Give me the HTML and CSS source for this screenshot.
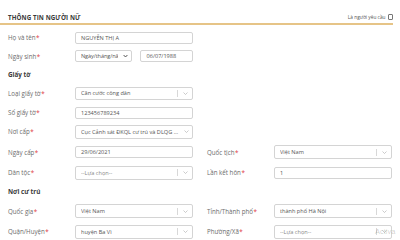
FILE: index.html
```html
<!DOCTYPE html>
<html lang="vi">
<head>
    <meta charset="UTF-8">
    <title>Thông tin người nữ</title>
    <link rel="stylesheet" href="styles.css">
</head>
<body>
    <div class="panel">
        <div class="panel-head">
            <h2 class="panel-title">THÔNG TIN NGƯỜI NỮ</h2>
            <label class="requester">Là người yêu cầu <span class="check"></span></label>
        </div>

        <div class="form-body">
            <div class="form-row">
                <div class="field">
                    <span class="lbl">Họ và tên<i>*</i></span>
                    <div class="input">NGUYỄN THỊ A</div>
                </div>
            </div>
            <div class="form-row">
                <div class="field">
                    <span class="lbl">Ngày sinh<i>*</i></span>
                    <div class="date-pair">
                        <div class="native-select">
                            <span class="native-val">Ngày/tháng/năm</span>
                            <svg width="5" height="4" viewBox="0 0 5 4"><path d="M0.6 1 L2.5 3 L4.4 1" fill="none" stroke="#444" stroke-width="0.9"/></svg>
                        </div>
                        <div class="input">06/07/1988</div>
                    </div>
                </div>
            </div>

            <div class="section-title">Giấy tờ</div>

            <div class="form-row">
                <div class="field">
                    <span class="lbl">Loại giấy tờ<i>*</i></span>
                    <div class="select"><span class="val">Căn cước công dân</span><span class="arrow"><svg width="5" height="3" viewBox="0 0 5 3"><path d="M0.5 0.5 L2.5 2.5 L4.5 0.5" fill="none" stroke="#aaa" stroke-width="0.6"/></svg></span></div>
                </div>
            </div>
            <div class="form-row">
                <div class="field">
                    <span class="lbl">Số giấy tờ<i>*</i></span>
                    <div class="input">123456789234</div>
                </div>
            </div>
            <div class="form-row">
                <div class="field">
                    <span class="lbl">Nơi cấp<i>*</i></span>
                    <div class="select"><span class="val">Cục Cảnh sát ĐKQL cư trú và DLQG về dân cư</span><span class="arrow plain"><svg width="5" height="3" viewBox="0 0 5 3"><path d="M0.5 0.5 L2.5 2.5 L4.5 0.5" fill="none" stroke="#aaa" stroke-width="0.6"/></svg></span></div>
                </div>
            </div>
            <div class="form-row">
                <div class="field">
                    <span class="lbl">Ngày cấp<i>*</i></span>
                    <div class="input">29/06/2021</div>
                </div>
                <div class="field">
                    <span class="lbl">Quốc tịch<i>*</i></span>
                    <div class="select tall"><span class="val">Việt Nam</span><span class="arrow"><svg width="5" height="3" viewBox="0 0 5 3"><path d="M0.5 0.5 L2.5 2.5 L4.5 0.5" fill="none" stroke="#aaa" stroke-width="0.6"/></svg></span></div>
                </div>
            </div>
            <div class="form-row">
                <div class="field">
                    <span class="lbl">Dân tộc<i>*</i></span>
                    <div class="select tall"><span class="val placeholder">--Lựa chọn--</span><span class="arrow"><svg width="5" height="3" viewBox="0 0 5 3"><path d="M0.5 0.5 L2.5 2.5 L4.5 0.5" fill="none" stroke="#aaa" stroke-width="0.6"/></svg></span></div>
                </div>
                <div class="field">
                    <span class="lbl">Lần kết hôn<i>*</i></span>
                    <div class="input">1</div>
                </div>
            </div>

            <div class="section-title">Nơi cư trú</div>

            <div class="form-row">
                <div class="field">
                    <span class="lbl">Quốc gia<i>*</i></span>
                    <div class="select tall"><span class="val">Việt Nam</span><span class="arrow"><svg width="5" height="3" viewBox="0 0 5 3"><path d="M0.5 0.5 L2.5 2.5 L4.5 0.5" fill="none" stroke="#aaa" stroke-width="0.6"/></svg></span></div>
                </div>
                <div class="field">
                    <span class="lbl">Tỉnh/Thành phố<i>*</i></span>
                    <div class="select tall"><span class="val">thành phố Hà Nội</span><span class="arrow"><svg width="5" height="3" viewBox="0 0 5 3"><path d="M0.5 0.5 L2.5 2.5 L4.5 0.5" fill="none" stroke="#aaa" stroke-width="0.6"/></svg></span></div>
                </div>
            </div>
            <div class="form-row">
                <div class="field">
                    <span class="lbl">Quận/Huyện<i>*</i></span>
                    <div class="select tall"><span class="val">huyện Ba Vì</span><span class="arrow"><svg width="5" height="3" viewBox="0 0 5 3"><path d="M0.5 0.5 L2.5 2.5 L4.5 0.5" fill="none" stroke="#aaa" stroke-width="0.6"/></svg></span></div>
                </div>
                <div class="field">
                    <span class="lbl">Phường/Xã<i>*</i></span>
                    <div class="select tall"><span class="val placeholder">--Lựa chọn--</span><span class="arrow"><svg width="5" height="3" viewBox="0 0 5 3"><path d="M0.5 0.5 L2.5 2.5 L4.5 0.5" fill="none" stroke="#aaa" stroke-width="0.6"/></svg></span></div>
                </div>
            </div>
        </div>
    </div>

    <div class="watermark">Activa</div>
</body>
</html>
```

FILE: styles.css
```css
* {
    margin: 0;
    padding: 0;
    box-sizing: border-box;
}

body {
    width: 400px;
    height: 240px;
    overflow: hidden;
    background: #fff;
    font-family: 'Open Sans', 'Noto Sans', sans-serif;
    color: #666;
    position: relative;
}

.panel {
    width: 393px;
}

.panel-head {
    display: flex;
    justify-content: space-between;
    align-items: center;
    padding: 12.5px 0 1px 8px;
    border-bottom: 2px solid #e6c487;
}

.panel-title {
    font-size: 6.2px;
    line-height: 9px;
    font-weight: 700;
    color: #3a3a3a;
    letter-spacing: 0.1px;
}

.requester {
    display: flex;
    align-items: center;
    gap: 2px;
    font-size: 4.8px;
    color: #555;
}

.check {
    width: 5.5px;
    height: 5.5px;
    border: 0.8px solid #777;
    border-radius: 1px;
}

.form-body {
    display: flex;
    flex-direction: column;
    gap: 6.5px;
    padding: 7px 0 0 8px;
}

.form-row {
    display: grid;
    grid-template-columns: 185px 185px;
    column-gap: 14px;
    align-items: center;
}

.field {
    display: grid;
    grid-template-columns: 66.5px 1fr;
    align-items: center;
}

.lbl {
    font-size: 6.2px;
    color: #6b6b6b;
    white-space: nowrap;
}

.lbl i {
    font-style: normal;
    color: #e0393e;
    margin-left: 0.5px;
}

.input,
.select,
.native-select {
    height: 12px;
    border: 0.8px solid #d4d4d4;
    border-radius: 2px;
    font-size: 5.6px;
    color: #555;
    display: flex;
    align-items: center;
    padding-left: 5.5px;
    white-space: nowrap;
    overflow: hidden;
}

.select {
    height: 13.5px;
    padding-right: 0;
}

.select.tall {
    height: 14px;
}

.select .val {
    flex: 1;
    overflow: hidden;
    text-overflow: ellipsis;
    padding-right: 2px;
}

.select .placeholder {
    color: #888;
}

.select .arrow {
    width: 15px;
    height: 7px;
    border-left: 0.6px solid #d8d8d8;
    display: flex;
    align-items: center;
    justify-content: center;
}

.select .arrow.plain {
    width: 11px;
    border-left: none;
}

.date-pair {
    display: grid;
    grid-template-columns: 57.5px 1fr;
    column-gap: 8px;
}

.native-select {
    justify-content: space-between;
    padding-right: 3.5px;
}

.native-val {
    overflow: hidden;
    text-overflow: clip;
    width: 37px;
    letter-spacing: -0.1px;
}

.section-title {
    font-size: 6.3px;
    line-height: 11.5px;
    height: 11.5px;
    font-weight: 700;
    color: #3a3a3a;
}

.watermark {
    position: absolute;
    left: 375px;
    top: 227px;
    font-size: 7.5px;
    color: rgba(0, 0, 0, 0.2);
    white-space: nowrap;
    font-family: 'Liberation Sans', sans-serif;
}
```
